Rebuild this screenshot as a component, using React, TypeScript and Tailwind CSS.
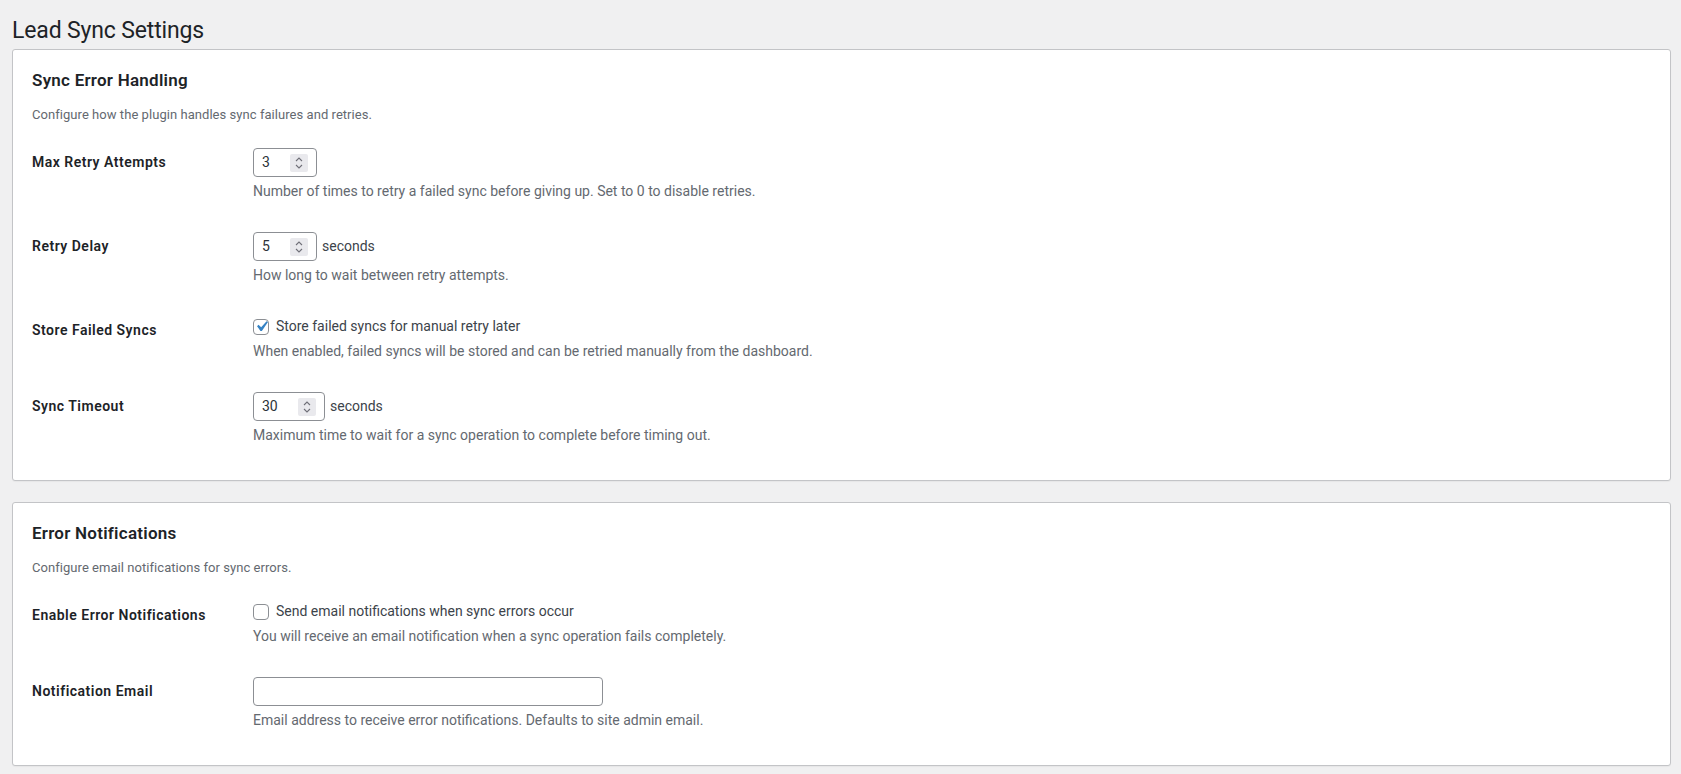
import type { ReactNode } from "react";

const font = { fontFamily: "Roboto, 'Liberation Sans', sans-serif" };

function Spinner() {
  return (
    <div className="w-[18px] h-[18px] bg-[#e9e9ed] rounded-[2px] flex items-center justify-center shrink-0">
      <svg width="10" height="14" viewBox="0 0 10 14" fill="none" stroke="#6f6f78" strokeWidth="1.1">
        <path d="M2 5l3-3 3 3" />
        <path d="M2 9l3 3 3-3" />
      </svg>
    </div>
  );
}

function NumberBox({ value, width }: { value: string; width: string }) {
  return (
    <div
      className={`${width} h-[29px] border border-[#8c8f94] rounded-[4px] bg-white flex items-center pl-[8px] pr-[8px]`}
    >
      <input
        readOnly
        value={value}
        className="flex-1 min-w-0 bg-transparent outline-none text-[14px] text-[#2c3338]"
        style={font}
      />
      <Spinner />
    </div>
  );
}

function Checkbox({ checked }: { checked?: boolean }) {
  return (
    <div className="w-[16px] h-[16px] border border-[#8c8f94] rounded-[4px] bg-white flex items-center justify-center shrink-0 mr-[7px]">
      {checked && (
        <svg width="21" height="21" viewBox="0 0 20 20" className="-m-[3px] shrink-0">
          <path
            fill="#3582c4"
            d="M14.83 4.89l1.34.94-5.81 8.38H9.02L5.78 9.67l1.34-1.25 2.57 2.4z"
          />
        </svg>
      )}
    </div>
  );
}

function Row({ label, children, hint }: { label: string; children: ReactNode; hint: string }) {
  return (
    <div className="flex">
      <div className="w-[210px] shrink-0 pt-[20px] pr-[10px] text-[14px] leading-[1.3] font-semibold tracking-[0.5px] text-[#1d2327]">
        {label}
      </div>
      <div className="pl-[11px] py-[15px]">
        {children}
        <p className="mt-[4px] text-[14px] leading-[21px] text-[#646970]">{hint}</p>
      </div>
    </div>
  );
}

function Card({ title, desc, children }: { title: string; desc: string; children: ReactNode }) {
  return (
    <section className="bg-white border border-[#c3c4c7] rounded-[3px] shadow-[0_1px_1px_rgba(0,0,0,0.04)] pl-[19px] pr-[20px] pt-[18px] pb-[19px]">
      <h2 className="text-[17px] leading-[24px] font-semibold tracking-[0.25px] text-[#1d2327]">{title}</h2>
      <p className="mt-[13px] text-[13px] leading-[20px] tracking-[0.05px] text-[#646970]">{desc}</p>
      <div className="mt-[8px]">{children}</div>
    </section>
  );
}

export default function App() {
  return (
    <div className="min-h-screen bg-[#f0f0f1] pl-[12px] pr-[10px] pt-[16px] pb-[9px]" style={font}>
      <h1 className="text-[23px] leading-[30px] font-normal tracking-[-0.15px] text-[#1d2327]">
        Lead Sync Settings
      </h1>

      <div className="mt-[3px]">
        <Card
          title="Sync Error Handling"
          desc="Configure how the plugin handles sync failures and retries."
        >
          <Row
            label="Max Retry Attempts"
            hint="Number of times to retry a failed sync before giving up. Set to 0 to disable retries."
          >
            <NumberBox value="3" width="w-[64px]" />
          </Row>
          <Row label="Retry Delay" hint="How long to wait between retry attempts.">
            <div className="flex items-center">
              <NumberBox value="5" width="w-[64px]" />
              <span className="ml-[5px] text-[14px] text-[#3c434a]">seconds</span>
            </div>
          </Row>
          <Row
            label="Store Failed Syncs"
            hint="When enabled, failed syncs will be stored and can be retried manually from the dashboard."
          >
            <div className="flex items-center h-[21px] text-[14px] text-[#3c434a]">
              <Checkbox checked />
              Store failed syncs for manual retry later
            </div>
          </Row>
          <Row
            label="Sync Timeout"
            hint="Maximum time to wait for a sync operation to complete before timing out."
          >
            <div className="flex items-center">
              <NumberBox value="30" width="w-[72px]" />
              <span className="ml-[5px] text-[14px] text-[#3c434a]">seconds</span>
            </div>
          </Row>
        </Card>
      </div>

      <div className="mt-[21px]">
        <Card title="Error Notifications" desc="Configure email notifications for sync errors.">
          <Row
            label="Enable Error Notifications"
            hint="You will receive an email notification when a sync operation fails completely."
          >
            <div className="flex items-center h-[21px] text-[14px] text-[#3c434a]">
              <Checkbox />
              Send email notifications when sync errors occur
            </div>
          </Row>
          <Row
            label="Notification Email"
            hint="Email address to receive error notifications. Defaults to site admin email."
          >
            <input
              type="email"
              className="block w-[350px] h-[29px] border border-[#8c8f94] rounded-[4px] bg-white px-[8px] outline-none text-[14px]"
              style={font}
            />
          </Row>
        </Card>
      </div>
    </div>
  );
}
